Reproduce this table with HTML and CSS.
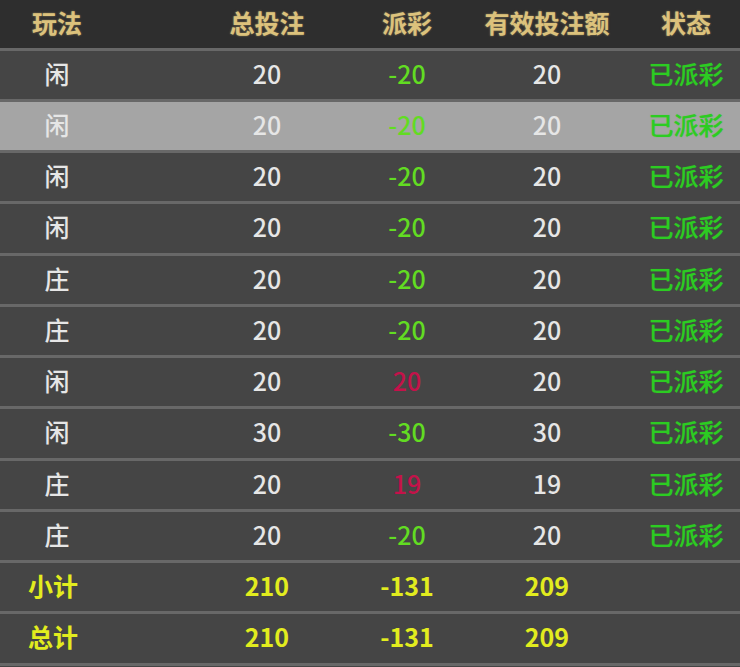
FILE: index.html
```html
<!DOCTYPE html>
<html lang="zh">
<head>
<meta charset="utf-8">
<link rel="stylesheet" href="styles.css">
</head>
<body>
<div class="table">
  <div class="row head">
    <div class="c1">玩法</div><div class="c2">总投注</div><div class="c3">派彩</div><div class="c4">有效投注额</div><div class="c5">状态</div>
  </div>
  <div class="row"><div class="c1">闲</div><div class="c2">20</div><div class="c3 win">-20</div><div class="c4">20</div><div class="c5 done">已派彩</div></div>
  <div class="row hl"><div class="c1">闲</div><div class="c2">20</div><div class="c3 win">-20</div><div class="c4">20</div><div class="c5 done">已派彩</div></div>
  <div class="row"><div class="c1">闲</div><div class="c2">20</div><div class="c3 win">-20</div><div class="c4">20</div><div class="c5 done">已派彩</div></div>
  <div class="row"><div class="c1">闲</div><div class="c2">20</div><div class="c3 win">-20</div><div class="c4">20</div><div class="c5 done">已派彩</div></div>
  <div class="row"><div class="c1">庄</div><div class="c2">20</div><div class="c3 win">-20</div><div class="c4">20</div><div class="c5 done">已派彩</div></div>
  <div class="row"><div class="c1">庄</div><div class="c2">20</div><div class="c3 win">-20</div><div class="c4">20</div><div class="c5 done">已派彩</div></div>
  <div class="row"><div class="c1">闲</div><div class="c2">20</div><div class="c3 lose">20</div><div class="c4">20</div><div class="c5 done">已派彩</div></div>
  <div class="row"><div class="c1">闲</div><div class="c2">30</div><div class="c3 win">-30</div><div class="c4">30</div><div class="c5 done">已派彩</div></div>
  <div class="row"><div class="c1">庄</div><div class="c2">20</div><div class="c3 lose">19</div><div class="c4">19</div><div class="c5 done">已派彩</div></div>
  <div class="row"><div class="c1">庄</div><div class="c2">20</div><div class="c3 win">-20</div><div class="c4">20</div><div class="c5 done">已派彩</div></div>
  <div class="row total"><div class="c1 lbl">小计</div><div class="c2">210</div><div class="c3">-131</div><div class="c4">209</div><div class="c5"></div></div>
  <div class="row total"><div class="c1 lbl">总计</div><div class="c2">210</div><div class="c3">-131</div><div class="c4">209</div><div class="c5"></div></div>
</div>
</body>
</html>
```
FILE: styles.css
```css
html, body {
  margin: 0;
  padding: 0;
  background: #454545;
}
body {
  width: 740px;
  height: 667px;
  overflow: hidden;
  font-family: "Noto Sans CJK SC", "Noto Sans", sans-serif;
  font-size: 25px;
  font-weight: 500;
  color: #e6e6e6;
}
.table {
  display: flex;
  flex-direction: column;
}
.row {
  display: grid;
  grid-template-columns: 114px 83px 140px 140px 140px 15px 108px;
  align-items: center;
  justify-items: center;
  height: 45.25px;
  padding-bottom: 3px;
  background: #454545;
  border-bottom: 3px solid #686868;
  line-height: 1;
}
.row.head {
  height: 44.5px;
  background: #2e2e2e;
  color: #dcc27c;
  font-weight: bold;
  text-shadow: 0 0 2px rgba(220, 194, 124, 0.6);
}
.row.hl {
  background: #a5a5a5;
}
.c1 { grid-column: 1; }
.c2 { grid-column: 3; }
.c3 { grid-column: 4; }
.c4 { grid-column: 5; }
.c5 { grid-column: 7; }
.win { color: #62dc22; }
.lose { color: #c4124a; }
.done { color: #2ccc22; text-shadow: 0 0 1px rgba(44, 204, 34, 0.6); }
.row.total {
  color: #e2ec1e;
  font-weight: bold;
}
.row.total .lbl {
  margin-right: 8px;
}
```
